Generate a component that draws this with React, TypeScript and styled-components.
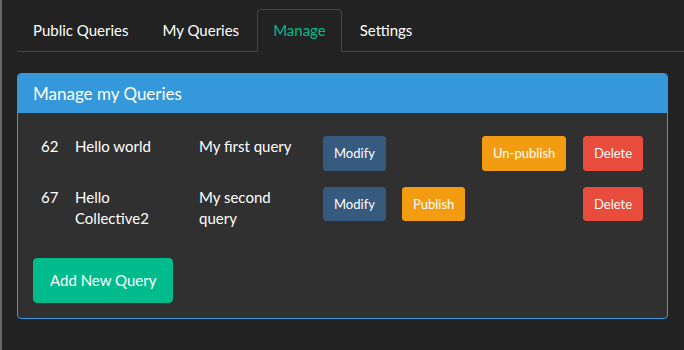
import styled, { createGlobalStyle } from "styled-components";

const GlobalStyle = createGlobalStyle`
  html, body {
    margin: 0;
    background-color: #222222;
    font-family: Lato, "Open Sans", sans-serif;
    font-size: 15px;
    color: #ffffff;
  }
`;

type Variant = "primary" | "warning" | "danger" | "success";

const COLORS: Record<Variant, string> = {
  primary: "#375a7f",
  warning: "#f39c12",
  danger: "#e74c3c",
  success: "#00bc8c",
};

type Query = {
  id: number;
  name: string;
  description: string;
  published: boolean;
};

const QUERIES: Query[] = [
  { id: 62, name: "Hello world", description: "My first query", published: true },
  { id: 67, name: "Hello Collective2", description: "My second query", published: false },
];

const TABS = ["Public Queries", "My Queries", "Manage", "Settings"];

function App() {
  return (
    <>
      <GlobalStyle />
      <Page>
        <Tabs>
          {TABS.map((tab) => (
            <Tab key={tab} $active={tab === "Manage"}>
              {tab}
            </Tab>
          ))}
        </Tabs>
        <Panel>
          <PanelHeading>Manage my Queries</PanelHeading>
          <PanelBody>
            <Table>
              <colgroup>
                <col style={{ width: 34 }} />
                <col style={{ width: 124 }} />
                <col style={{ width: 124 }} />
                <col style={{ width: 79 }} />
                <col style={{ width: 80 }} />
                <col style={{ width: 101 }} />
                <col />
              </colgroup>
              <tbody>
                {QUERIES.map((q) => (
                  <tr key={q.id}>
                    <Cell>{q.id}</Cell>
                    <Cell>{q.name}</Cell>
                    <Cell>{q.description}</Cell>
                    <Cell>
                      <SmallButton $variant="primary">Modify</SmallButton>
                    </Cell>
                    <Cell>
                      {!q.published && (
                        <SmallButton $variant="warning">Publish</SmallButton>
                      )}
                    </Cell>
                    <Cell>
                      {q.published && (
                        <SmallButton $variant="warning">Un-publish</SmallButton>
                      )}
                    </Cell>
                    <Cell>
                      <SmallButton $variant="danger">Delete</SmallButton>
                    </Cell>
                  </tr>
                ))}
              </tbody>
            </Table>
            <Button $variant="success">Add New Query</Button>
          </PanelBody>
        </Panel>
      </Page>
    </>
  );
}

const Page = styled.div`
  min-height: 350px;
  box-sizing: border-box;
  border-left: 2px solid #686868;
  padding: 9px 0 0 15px;
`;

const Tabs = styled.ul`
  display: flex;
  list-style: none;
  margin: 0;
  padding: 0;
  border-bottom: 1px solid #464545;
`;

const Tab = styled.li<{ $active?: boolean }>`
  margin: 0 2px -1px 0;
  padding: 10px 15px;
  line-height: 21px;
  border: 1px solid ${(p) => (p.$active ? "#464545" : "transparent")};
  border-bottom-color: ${(p) => (p.$active ? "#222222" : "transparent")};
  border-radius: 4px 4px 0 0;
  background-color: ${(p) => (p.$active ? "#222222" : "transparent")};
  color: ${(p) => (p.$active ? "#00bc8c" : "#ffffff")};
  cursor: pointer;
`;

const Panel = styled.div`
  margin: 21px 16px 0 0;
  border: 1px solid #3498db;
  border-radius: 4px;
  background-color: #303030;
  overflow: hidden;
`;

const PanelHeading = styled.div`
  background-color: #3498db;
  padding: 10px 15px;
  font-size: 17px;
  line-height: 19px;
  color: #ffffff;
`;

const PanelBody = styled.div`
  padding: 15px;
`;

const Table = styled.table`
  width: 100%;
  table-layout: fixed;
  border-collapse: collapse;
  margin-bottom: 21px;
`;

const Cell = styled.td`
  padding: 8px;
  vertical-align: top;
  line-height: 1.428571;
`;

const Button = styled.button<{ $variant: Variant }>`
  font-family: inherit;
  font-size: 15px;
  line-height: 22.4px;
  padding: 10px 16px;
  border: 1px solid ${(p) => COLORS[p.$variant]};
  border-radius: 4px;
  background-color: ${(p) => COLORS[p.$variant]};
  color: #ffffff;
  cursor: pointer;
  display: block;
`;

const SmallButton = styled(Button)`
  font-size: 13px;
  line-height: 20.5px;
  padding: 6px 10px;
  border-radius: 3px;
  white-space: nowrap;
`;

export default App;
